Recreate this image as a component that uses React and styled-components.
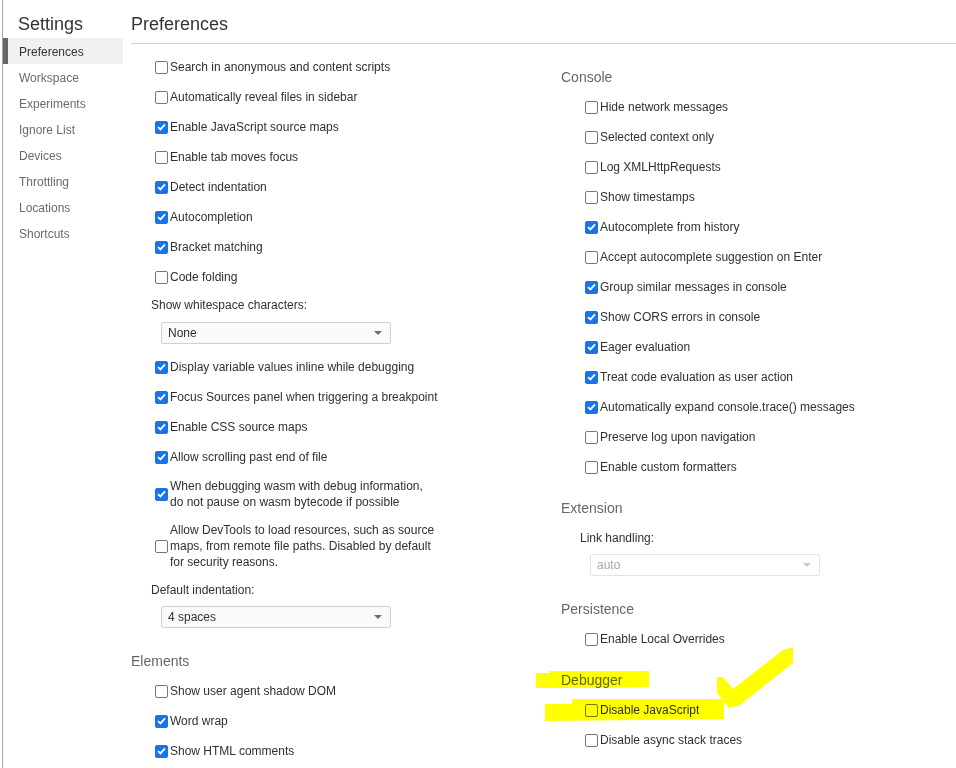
import React from "react";
import styled, { createGlobalStyle } from "styled-components";

const GlobalStyle = createGlobalStyle`
  html, body { margin: 0; padding: 0; background: #fff; }
  body {
    font-family: "Segoe UI", "Liberation Sans", Arial, sans-serif;
    font-size: 12px;
    color: #303030;
  }
  * { box-sizing: border-box; }
`;

const Root = styled.div`
  position: relative;
  width: 956px;
  height: 768px;
  overflow: hidden;
`;

const Page = styled.div`
  display: flex;
  height: 768px;
  margin-left: 2px;
  border-left: 1px solid #a8a8a8;
`;

const Sidebar = styled.nav`
  width: 120px;
  flex: none;
  display: flex;
  flex-direction: column;
`;

const SidebarTitle = styled.div`
  padding: 12px 0 0 15px;
  height: 38px;
  line-height: 24px;
  font-size: 18px;
  color: #333;
`;

const NavItem = styled.div`
  height: 26px;
  padding: 2px 0 0 16px;
  line-height: 24px;
  font-size: 12px;
  color: ${(p) => (p.$active ? "#333" : "#6a6a6a")};
  background: ${(p) => (p.$active ? "#f1f1f1" : "transparent")};
  box-shadow: ${(p) => (p.$active ? "inset 5px 0 0 #666" : "none")};
`;

const Main = styled.main`
  flex: 1;
  padding-left: 8px;
  display: flex;
  flex-direction: column;
`;

const Header = styled.header`
  height: 44px;
  padding-top: 12px;
  line-height: 24px;
  font-size: 18px;
  color: #333;
  border-bottom: 1px solid #cfcfcf;
`;

const Columns = styled.div`
  display: flex;
  padding-top: 8px;
`;

const Column = styled.div`
  width: 430px;
  display: flex;
  flex-direction: column;
`;

const SectionTitle = styled.div`
  height: 30px;
  line-height: 30px;
  margin-top: ${(p) => p.$mt || 0}px;
  font-size: 14px;
  color: #666;
`;

const Row = styled.label`
  display: flex;
  align-items: center;
  gap: 2px;
  min-height: 30px;
  padding: ${(p) => (p.$multi ? "6px 0 6px 24px" : "0 0 0 24px")};
  color: #303030;
  line-height: 16px;
`;

const Box = styled.span`
  flex: none;
  width: 13px;
  height: 13px;
  border-radius: 2px;
  border: 1px solid ${(p) => (p.$checked ? "#1a73e8" : "#767676")};
  background: ${(p) => (p.$checked ? "#1a73e8" : "#fff")};
  display: flex;
  align-items: center;
  justify-content: center;
`;

const FieldLabel = styled.div`
  height: ${(p) => p.$h || 26}px;
  line-height: ${(p) => p.$h || 26}px;
  margin-top: ${(p) => p.$mt || 0}px;
  padding-left: ${(p) => p.$indent || 20}px;
  color: #303030;
`;

const SelectBox = styled.div`
  margin-top: ${(p) => p.$mt || 0}px;
  margin-bottom: ${(p) => p.$mb || 0}px;
  margin-left: ${(p) => p.$indent || 30}px;
  width: 230px;
  height: 22px;
  display: flex;
  align-items: center;
  justify-content: space-between;
  padding: 0 8px 0 6px;
  border: 1px solid ${(p) => (p.$disabled ? "#e3e3e3" : "#cfcfcf")};
  border-radius: 2px;
  background: ${(p) => (p.$disabled ? "#fff" : "#fafafa")};
  color: ${(p) => (p.$disabled ? "#a8a8a8" : "#303030")};
`;

const Annotations = styled.svg`
  position: absolute;
  left: 0;
  top: 0;
  width: 956px;
  height: 768px;
  pointer-events: none;
  mix-blend-mode: multiply;
`;

function Check({ checked, children, multi }) {
  return (
    <Row $multi={multi}>
      <Box $checked={checked}>
        {checked && (
          <svg width="9" height="8" viewBox="0 0 9 8">
            <polyline
              points="1,4.2 3.4,6.4 8,1.3"
              fill="none"
              stroke="#fff"
              strokeWidth="1.8"
            />
          </svg>
        )}
      </Box>
      <span>{children}</span>
    </Row>
  );
}

function Select({ value, disabled, mt, mb, indent }) {
  return (
    <SelectBox $disabled={disabled} $mt={mt} $mb={mb} $indent={indent}>
      <span>{value}</span>
      <svg width="8" height="4" viewBox="0 0 8 4">
        <polygon points="0,0 8,0 4,4" fill={disabled ? "#c8c8c8" : "#6e6e6e"} />
      </svg>
    </SelectBox>
  );
}

const nav = [
  "Preferences",
  "Workspace",
  "Experiments",
  "Ignore List",
  "Devices",
  "Throttling",
  "Locations",
  "Shortcuts",
];

const sourcesA = [
  ["Search in anonymous and content scripts", false],
  ["Automatically reveal files in sidebar", false],
  ["Enable JavaScript source maps", true],
  ["Enable tab moves focus", false],
  ["Detect indentation", true],
  ["Autocompletion", true],
  ["Bracket matching", true],
  ["Code folding", false],
];

const sourcesB = [
  ["Display variable values inline while debugging", true],
  ["Focus Sources panel when triggering a breakpoint", true],
  ["Enable CSS source maps", true],
  ["Allow scrolling past end of file", true],
];

const elements = [
  ["Show user agent shadow DOM", false],
  ["Word wrap", true],
  ["Show HTML comments", true],
];

const consoleItems = [
  ["Hide network messages", false],
  ["Selected context only", false],
  ["Log XMLHttpRequests", false],
  ["Show timestamps", false],
  ["Autocomplete from history", true],
  ["Accept autocomplete suggestion on Enter", false],
  ["Group similar messages in console", true],
  ["Show CORS errors in console", true],
  ["Eager evaluation", true],
  ["Treat code evaluation as user action", true],
  ["Automatically expand console.trace() messages", true],
  ["Preserve log upon navigation", false],
  ["Enable custom formatters", false],
];

export default function App() {
  return (
    <Root>
      <GlobalStyle />
      <Page>
        <Sidebar>
          <SidebarTitle>Settings</SidebarTitle>
          {nav.map((n, i) => (
            <NavItem key={n} $active={i === 0}>
              {n}
            </NavItem>
          ))}
        </Sidebar>
        <Main>
          <Header>Preferences</Header>
          <Columns>
            <Column>
              {sourcesA.map(([t, c]) => (
                <Check key={t} checked={c}>
                  {t}
                </Check>
              ))}
              <FieldLabel>Show whitespace characters:</FieldLabel>
              <Select value="None" mt={4} mb={8} />
              {sourcesB.map(([t, c]) => (
                <Check key={t} checked={c}>
                  {t}
                </Check>
              ))}
              <Check checked multi>
                When debugging wasm with debug information,
                <br />
                do not pause on wasm bytecode if possible
              </Check>
              <Check checked={false} multi>
                Allow DevTools to load resources, such as source
                <br />
                maps, from remote file paths. Disabled by default
                <br />
                for security reasons.
              </Check>
              <FieldLabel $mt={1}>Default indentation:</FieldLabel>
              <Select value="4 spaces" mt={3} />
              <SectionTitle $mt={18}>Elements</SectionTitle>
              {elements.map(([t, c]) => (
                <Check key={t} checked={c}>
                  {t}
                </Check>
              ))}
            </Column>
            <Column>
              <SectionTitle $mt={10}>Console</SectionTitle>
              {consoleItems.map(([t, c]) => (
                <Check key={t} checked={c}>
                  {t}
                </Check>
              ))}
              <SectionTitle $mt={11}>Extension</SectionTitle>
              <FieldLabel $h={30} $indent={19}>
                Link handling:
              </FieldLabel>
              <Select value="auto" disabled mt={1} indent={29} />
              <SectionTitle $mt={18}>Persistence</SectionTitle>
              <Check checked={false}>Enable Local Overrides</Check>
              <SectionTitle $mt={11}>Debugger</SectionTitle>
              <Check checked={false}>Disable JavaScript</Check>
              <Check checked={false}>Disable async stack traces</Check>
            </Column>
          </Columns>
        </Main>
      </Page>
      <Annotations viewBox="0 0 956 768">
        <polygon
          points="536,673 550,673 550,671 649,671 649,687 600,688 536,688"
          fill="#ffff00"
        />
        <polygon
          points="572,699 723,699 724,704 724,719 640,720 545,721 545,704 572,704"
          fill="#ffff00"
        />
        <polygon
          points="717,677 723,677 733,689 783,650 793,647 793,663 740,705 729,708 717,693"
          fill="#ffff00"
        />
      </Annotations>
    </Root>
  );
}
